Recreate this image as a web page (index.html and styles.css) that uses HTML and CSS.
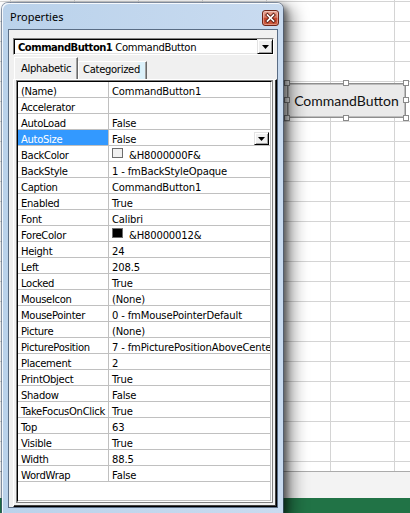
FILE: index.html
```html
<!DOCTYPE html>
<html>
<head>
<meta charset="utf-8">
<title>Properties</title>
<link rel="stylesheet" href="styles.css">
</head>
<body>
<div class="sheet">
  <div class="cells">
    <div class="cmdbtn">CommandButton
      <span class="h h-tl"></span><span class="h h-tc"></span><span class="h h-tr"></span>
      <span class="h h-ml"></span><span class="h h-mr"></span>
      <span class="h h-bl"></span><span class="h h-bc"></span><span class="h h-br"></span>
    </div>
  </div>
  <div class="sheettabs"></div>
  <div class="status"></div>
</div>

<div class="window">
  <div class="titlebar">
    <span class="title">Properties</span>
    <span class="close"><svg width="15" height="14" viewBox="0 0 15 14"><path d="M4.5 4 L10.5 10 M10.5 4 L4.5 10" stroke="#5b1a10" stroke-width="3.4" stroke-linecap="square"/><path d="M4.5 4 L10.5 10 M10.5 4 L4.5 10" stroke="#fff" stroke-width="1.7" stroke-linecap="square"/></svg></span>
  </div>
  <div class="client">
    <div class="combo">
      <span class="combo-text"><b>CommandButton1</b> CommandButton</span>
      <span class="dd combo-btn"><svg width="7" height="4" viewBox="0 0 7 4"><polygon points="0,0 7,0 3.5,4" fill="#000"/></svg></span>
    </div>
    <div class="tabs">
      <span class="tab active">Alphabetic</span>
      <span class="tab">Categorized</span>
    </div>
    <div class="page">
      <div class="frame">
        <div class="grid">
          <div class="grid-in">
            <div class="rows">
              <div class="row"><span class="k">(Name)</span><span class="v"><span class="t">CommandButton1</span></span></div>
              <div class="row"><span class="k">Accelerator</span><span class="v"><span class="t"></span></span></div>
              <div class="row"><span class="k">AutoLoad</span><span class="v"><span class="t">False</span></span></div>
              <div class="row"><span class="k sel">AutoSize</span><span class="v"><span class="t">False</span><span class="dd cell-btn"><svg width="7" height="4" viewBox="0 0 7 4"><polygon points="0,0 7,0 3.5,4" fill="#000"/></svg></span></span></div>
              <div class="row"><span class="k">BackColor</span><span class="v"><span class="sw sw-light"></span><span class="t">&amp;H8000000F&amp;</span></span></div>
              <div class="row"><span class="k">BackStyle</span><span class="v"><span class="t">1 - fmBackStyleOpaque</span></span></div>
              <div class="row"><span class="k">Caption</span><span class="v"><span class="t">CommandButton1</span></span></div>
              <div class="row"><span class="k">Enabled</span><span class="v"><span class="t">True</span></span></div>
              <div class="row"><span class="k">Font</span><span class="v"><span class="t">Calibri</span></span></div>
              <div class="row"><span class="k">ForeColor</span><span class="v"><span class="sw sw-dark"></span><span class="t">&amp;H80000012&amp;</span></span></div>
              <div class="row"><span class="k">Height</span><span class="v"><span class="t">24</span></span></div>
              <div class="row"><span class="k">Left</span><span class="v"><span class="t">208.5</span></span></div>
              <div class="row"><span class="k">Locked</span><span class="v"><span class="t">True</span></span></div>
              <div class="row"><span class="k">MouseIcon</span><span class="v"><span class="t">(None)</span></span></div>
              <div class="row"><span class="k">MousePointer</span><span class="v"><span class="t">0 - fmMousePointerDefault</span></span></div>
              <div class="row"><span class="k">Picture</span><span class="v"><span class="t">(None)</span></span></div>
              <div class="row"><span class="k">PicturePosition</span><span class="v"><span class="t">7 - fmPicturePositionAboveCenter</span></span></div>
              <div class="row"><span class="k">Placement</span><span class="v"><span class="t">2</span></span></div>
              <div class="row"><span class="k">PrintObject</span><span class="v"><span class="t">True</span></span></div>
              <div class="row"><span class="k">Shadow</span><span class="v"><span class="t">False</span></span></div>
              <div class="row"><span class="k">TakeFocusOnClick</span><span class="v"><span class="t">True</span></span></div>
              <div class="row"><span class="k">Top</span><span class="v"><span class="t">63</span></span></div>
              <div class="row"><span class="k">Visible</span><span class="v"><span class="t">True</span></span></div>
              <div class="row"><span class="k">Width</span><span class="v"><span class="t">88.5</span></span></div>
              <div class="row"><span class="k">WordWrap</span><span class="v"><span class="t">False</span></span></div>
            </div>
          </div>
        </div>
      </div>
    </div>
  </div>
</div>
</body>
</html>
```

FILE: styles.css
```css
* { box-sizing: border-box; margin: 0; padding: 0; }
html, body { width: 410px; height: 513px; overflow: hidden; }
body {
  background: #fff;
  font-family: "DejaVu Sans", sans-serif;
  font-size: 10px;
  letter-spacing: -0.3px;
  color: #000;
  position: relative;
}

/* ---------- spreadsheet behind ---------- */
.sheet { display: flex; flex-direction: column; height: 513px; }
.cells {
  position: relative;
  height: 472px;
  border-bottom: 1px solid #ababab;
  background-color: #fff;
  background-image:
    repeating-linear-gradient(90deg, transparent 0 10px, #d4d4d4 10px 11px, transparent 11px 64px),
    repeating-linear-gradient(180deg, #d4d4d4 0 1px, transparent 1px 20px);
  background-position: 0 0, 0 1px;
}
.sheettabs { height: 26px; background: #f3f3f3; }
.status { height: 15px; background: #217346; }

.cmdbtn {
  position: absolute;
  left: 287px; top: 83px;
  width: 119px; height: 35px;
  background: #eaeaea;
  border: 1px solid #8e8e8e;
  box-shadow: inset 0 0 0 1px #bdbdbd;
  display: flex; align-items: center; justify-content: center;
  font-family: Lato, "Open Sans", sans-serif;
  font-size: 14px;
  letter-spacing: 0;
  color: #111;
}
.h {
  position: absolute;
  width: 6px; height: 6px;
  background: #fff;
  border: 1px solid #8a8a8a;
}
.h-tl { left: -4px; top: -4px; }
.h-tc { left: 55px; top: -4px; }
.h-tr { right: -4px; top: -4px; }
.h-ml { left: -4px; top: 13px; }
.h-mr { right: -4px; top: 13px; }
.h-bl { left: -4px; bottom: -4px; }
.h-bc { left: 55px; bottom: -4px; }
.h-br { right: -4px; bottom: -4px; }

/* ---------- properties window ---------- */
.window {
  position: absolute;
  left: 2px; top: 3px;
  width: 281px; height: 510px;
  padding: 0 5px 5px 6px;
  display: flex; flex-direction: column;
  background: linear-gradient(90deg, #bad2eb, #c9dbf0);
  border-radius: 6px 6px 0 0;
  box-shadow:
    inset 1px 1px 0 rgba(255,255,255,0.85),
    0 0 0 1px rgba(70, 90, 120, 0.6),
    4px 3px 6px 0 rgba(0, 0, 0, 0.45),
    8px 6px 16px 2px rgba(0, 0, 0, 0.4);
}
.titlebar {
  height: 26px;
  display: flex;
  align-items: flex-start;
  padding: 6px 0 0 2px;
}
.title {
  font-family: "Noto Sans", "Liberation Sans", sans-serif;
  font-size: 11px;
  line-height: 15px;
  letter-spacing: 0;
  color: #000;
}
.close {
  margin-left: auto;
  margin-right: -1px;
  margin-top: 1px;
  width: 17px; height: 16px;
  border: 1px solid #6e2519;
  border-radius: 3px;
  background: linear-gradient(180deg, #e9a999 0%, #d77560 45%, #c4452c 52%, #cd5c40 100%);
  box-shadow: inset 0 0 0 1px rgba(255,255,255,0.35);
  display: flex; align-items: center; justify-content: center;
}

.client {
  flex: 1;
  border: 1px solid #5a6d85;
  background: #f0f0f0;
  padding: 8px 0 0 4px;
  display: flex; flex-direction: column;
}

.combo {
  width: 261px; height: 17px;
  background: #fff;
  border: 1px solid;
  border-color: #808080 #fff #fff #808080;
  box-shadow: inset 1px 1px 0 #000, inset -1px -1px 0 #e3e3e3;
  display: flex; align-items: flex-start;
}
.combo-text {
  padding: 2px 0 0 4px;
  line-height: 13px;
  white-space: nowrap;
}
.combo-text b { letter-spacing: -0.5px; }

.dd {
  background: #f0f0f0;
  border: 1px solid;
  border-color: #e3e3e3 #000 #000 #e3e3e3;
  box-shadow: inset 1px 1px 0 #fff, inset -1px -1px 0 #a0a0a0;
  display: flex; align-items: center; justify-content: center;
}
.combo-btn { margin-left: auto; width: 16px; height: 15px; }

.tabs {
  margin-top: 2px;
  height: 22px;
  padding-left: 1px;
  display: flex; align-items: flex-end;
}
.tab {
  height: 18px;
  width: 69px;
  padding: 0 5px 0 4px;
  border: 1px solid;
  border-bottom: 0;
  border-color: #fff #696969 transparent #fff;
  box-shadow: inset -1px 0 0 #a0a0a0;
  line-height: 15px;
  white-space: nowrap;
  background: linear-gradient(90deg, #f0f0f0 0 58px, #dcf1fa 61px);
}
.tab.active {
  height: 22px;
  width: 64px;
  padding: 3px 6px 0 6px;
  background: #f0f0f0;
}

.page {
  flex: 1;
  width: 264px;
  border: 1px solid;
  border-color: #fff #000 #000 #fff;
  display: flex; flex-direction: column;
}
.frame {
  flex: 1;
  border-right: 1px solid #404040;
  border-bottom: 1px solid #404040;
  padding: 0 2px 2px 2px;
  display: flex; flex-direction: column;
}
.grid {
  flex: 1;
  border: 1px solid #808080;
  display: flex; flex-direction: column;
}
.grid-in {
  flex: 1;
  border: 1px solid;
  border-color: #000 #fff #fff #000;
  background: #fff;
  display: flex; flex-direction: column;
}
.rows {
  flex: 1;
  border-right: 1px solid #c0c0c0;
  border-bottom: 1px solid #c0c0c0;
}
.row {
  display: flex;
  height: 16px;
  border-bottom: 1px solid #c0c0c0;
}
.k {
  width: 91px;
  flex: none;
  border-right: 1px solid #c0c0c0;
  padding: 4px 0 0 3px;
  line-height: 11px;
  white-space: nowrap;
}
.k.sel { background: #3399ff; color: #fff; }
.v {
  flex: 1;
  min-width: 0;
  display: flex; align-items: flex-start;
  padding-left: 3px;
  overflow: hidden;
  white-space: nowrap;
  letter-spacing: -0.15px;
}
.t { padding-top: 4px; line-height: 11px; }
.cell-btn {
  margin-left: auto;
  margin-right: 1px;
  margin-top: 2px;
  width: 15px; height: 13px;
  flex: none;
}
.sw {
  flex: none;
  width: 11px; height: 10px;
  margin: 2px 6px 0 0;
  border: 1px solid #6d6d6d;
}
.sw-light { background: #f0f0f0; }
.sw-dark { background: #000; }
```
